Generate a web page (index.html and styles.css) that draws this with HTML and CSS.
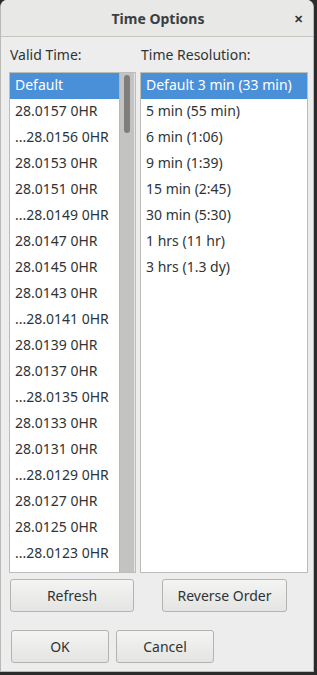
FILE: index.html
```html
<!DOCTYPE html>
<html lang="en">
<head>
    <meta charset="UTF-8">
    <meta name="viewport" content="width=device-width, initial-scale=1.0">
    <title>Time Options</title>
    <link rel="stylesheet" href="styles.css">
</head>
<body>
    <div class="dialog">
        <div class="titlebar">
            <span></span>
            <span class="title">Time Options</span>
            <span class="close">&#x2715;</span>
        </div>

        <div class="content">
            <div class="columns">
                <div class="label">Valid Time:</div>
                <div class="label">Time Resolution:</div>

                <!-- Valid time list with scrollbar -->
                <div class="listbox">
                    <ul class="list">
                        <li class="selected">Default</li>
                        <li>28.0157 0HR</li>
                        <li>...28.0156 0HR</li>
                        <li>28.0153 0HR</li>
                        <li>28.0151 0HR</li>
                        <li>...28.0149 0HR</li>
                        <li>28.0147 0HR</li>
                        <li>28.0145 0HR</li>
                        <li>28.0143 0HR</li>
                        <li>...28.0141 0HR</li>
                        <li>28.0139 0HR</li>
                        <li>28.0137 0HR</li>
                        <li>...28.0135 0HR</li>
                        <li>28.0133 0HR</li>
                        <li>28.0131 0HR</li>
                        <li>...28.0129 0HR</li>
                        <li>28.0127 0HR</li>
                        <li>28.0125 0HR</li>
                        <li>...28.0123 0HR</li>
                    </ul>
                    <div class="scrollbar">
                        <div class="thumb"></div>
                    </div>
                </div>

                <!-- Resolution list -->
                <div class="listbox">
                    <ul class="list">
                        <li class="selected">Default 3 min (33 min)</li>
                        <li>5 min (55 min)</li>
                        <li>6 min (1:06)</li>
                        <li>9 min (1:39)</li>
                        <li>15 min (2:45)</li>
                        <li>30 min (5:30)</li>
                        <li>1 hrs (11 hr)</li>
                        <li>3 hrs (1.3 dy)</li>
                    </ul>
                </div>

                <button class="btn refresh">Refresh</button>
                <button class="btn reverse">Reverse Order</button>
            </div>

            <div class="actions">
                <button class="btn action">OK</button>
                <button class="btn action">Cancel</button>
            </div>
        </div>
    </div>
</body>
</html>
```

FILE: styles.css
```css
/* General reset */
body {
    margin: 0;
    padding: 0;
    background-color: #2b2b2b;
    font-family: "Noto Sans", sans-serif;
    font-size: 14px;
    color: #2e3436;
}

/* Window */
.dialog {
    box-sizing: border-box;
    width: 314px;
    height: 672px;
    background-color: #ededed;
    border: 1px solid #b9b9b6;
    border-top: none;
    border-radius: 7px 7px 0 0;
    overflow: hidden;
}

/* Title bar */
.titlebar {
    height: 36px;
    display: grid;
    grid-template-columns: 1fr auto 1fr;
    align-items: center;
    background-color: #e8e8e7;
    border-bottom: 1px solid #c4c4c1;
}

.title {
    font-weight: bold;
    font-size: 14px;
    margin-left: 2px;
    color: #3a3f41;
}

.close {
    justify-self: end;
    margin-right: 10px;
    font-size: 11px;
    font-weight: bold;
}

/* Content */
.content {
    padding: 0 6px 0 8px;
}

.columns {
    display: grid;
    grid-template-columns: 127px 168px;
    column-gap: 4px;
}

.label {
    height: 35px;
    line-height: 35px;
    padding-left: 1px;
}

.listbox {
    box-sizing: border-box;
    height: 501px;
    display: flex;
    background-color: #fff;
    border: 1px solid #bcbcb9;
    overflow: hidden;
}

.list {
    flex: 1;
    margin: 0;
    padding: 0;
    list-style: none;
}

.list li {
    height: 26px;
    line-height: 24px;
    padding-left: 5px;
    white-space: nowrap;
}

.list li.selected {
    background-color: #4a90d9;
    color: #fff;
}

/* Scrollbar */
.scrollbar {
    width: 14px;
    background-color: #c3c3c1;
    border-left: 1px solid #b8b8b5;
    border-right: 1px solid #e4e4e2;
    display: flex;
    justify-content: center;
    padding-top: 2px;
}

.thumb {
    width: 6px;
    height: 58px;
    background-color: #7e7e7c;
    border-radius: 3px;
}

/* Buttons */
.btn {
    box-sizing: border-box;
    height: 33px;
    font-family: "Noto Sans", sans-serif;
    font-size: 14px;
    color: #2e3436;
    background: linear-gradient(#f4f4f3, #e4e4e2);
    border: 1px solid #b3b3b0;
    border-radius: 3px;
    padding: 0;
    cursor: pointer;
}

.refresh {
    width: 124px;
    margin: 6px 0 0 1px;
}

.reverse {
    width: 125px;
    margin: 6px 0 0 22px;
}

.actions {
    display: flex;
    gap: 7px;
    padding: 18px 0 0 2px;
}

.action {
    width: 98px;
}
```
